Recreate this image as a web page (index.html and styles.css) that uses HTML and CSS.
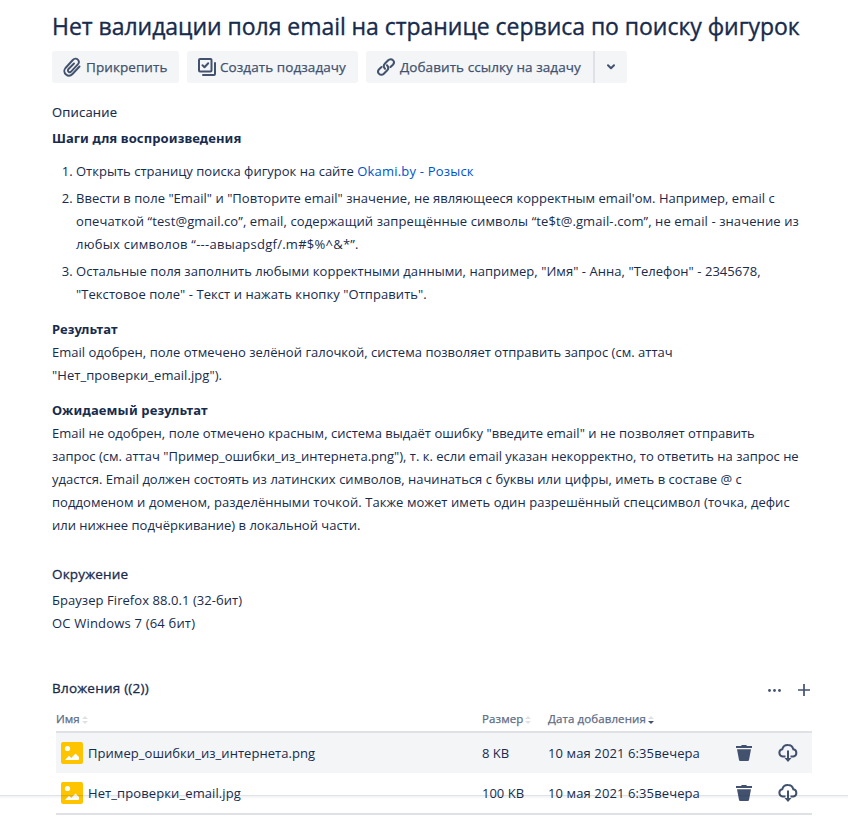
FILE: index.html
```html
<!DOCTYPE html>
<html lang="ru">
<head>
<meta charset="utf-8">
<title>Нет валидации поля email</title>
<link rel="stylesheet" href="styles.css">
</head>
<body>
<svg width="0" height="0" class="defs" aria-hidden="true">
  <symbol id="image" viewBox="0 0 22 22"><rect width="22" height="22" rx="2" fill="#ffc400"/><circle cx="6.500" cy="6.500" r="2.600" fill="#fff"/><path d="M4 18l4-4.200 2.200 2.200 4.300-4.600L18 15v2a1 1 0 0 1-1 1z" fill="#fff"/></symbol>
  <symbol id="trash" viewBox="0 0 16 16"><path d="M0 1.100h5L5.800 0h4.400l.8 1.100h5V3H0zM1 4.200h14l-2 10.800q-.2 1-1.200 1H4.200q-1 0-1.200-1z" fill="currentColor"/></symbol>
  <symbol id="cloud" viewBox="0 0 20 18"><path d="M7.500 12.500H4.700A3.700 3.700 0 0 1 4.300 5.200C5 2.500 7.500 1 10 1.100c3 0 4.700 1.900 5.300 4.200a3.650 3.650 0 0 1 0 7.200h-2.800M10 6.500V15" fill="none" stroke="currentColor" stroke-width="2"/><path d="M6.500 14h7L10 18z" fill="currentColor"/></symbol>
  <symbol id="sort" viewBox="0 0 6 8"><path class="up" d="M3 0l3 3H0z"/><path class="down" d="M0 5h6L3 8z"/></symbol>
</svg>
<main class="issue">
  <h1 class="title">Нет валидации поля email на странице сервиса по поиску фигурок</h1>
  <div class="toolbar">
    <button class="btn attach"><svg width="18" height="20" viewBox="0 0 18 20" fill="none" stroke="currentColor" stroke-width="1.900" stroke-linecap="round"><path d="M16.500 9.500l-7 7.500C7.700 18.900 5 19.200 3 17.500S.8 13 2.500 11l7.300-8c1.600-1.700 3.700-1.700 5-.4s1.300 3.300 0 4.800l-6.500 7c-.9 1-2 1-2.800.3s-.8-1.800 0-2.700L11 6.500"/></svg><span>Прикрепить</span></button>
    <button class="btn subtask"><svg width="18" height="18" viewBox="0 0 18 18" fill="none" stroke="currentColor" stroke-width="2" stroke-linecap="round" stroke-linejoin="round"><rect x="1" y="1" width="12.500" height="12.500" rx="1"/><path d="M4.500 7.300l2 2 3.700-4M17 5v11q0 1-1 1H5"/></svg><span>Создать подзадачу</span></button>
    <div class="split">
      <button class="btn link"><svg width="18" height="18" viewBox="0 0 18 18" fill="none" stroke="currentColor" stroke-width="2" stroke-linecap="round"><path d="M8 10.800C6.300 9 6.500 7 8 5.500l3.200-3.200c1.500-1.500 3.400-1.500 4.700-.2s1.300 3.200 0 4.600L13.500 9M10 7.200c1.700 1.800 1.500 3.800 0 5.300l-3.200 3.200c-1.500 1.500-3.400 1.500-4.700.2s-1.300-3.200 0-4.600L4.500 9"/></svg><span>Добавить ссылку на задачу</span></button>
      <button class="btn more" aria-label="Ещё"><svg width="8" height="6" viewBox="0 0 8 6" fill="none" stroke="currentColor" stroke-width="2" stroke-linecap="round" stroke-linejoin="round"><path d="M1 1.200l3 3 3-3"/></svg></button>
    </div>
  </div>

  <section class="description">
    <h2 class="label">Описание</h2>
    <h3 class="steps">Шаги для воспроизведения</h3>
    <ol>
      <li><span class="line">Открыть страницу поиска фигурок на сайте <a>Okami.by - Розыск</a></span></li>
      <li><span class="line s3">Ввести в поле "Email" и "Повторите email" значение, не являющееся корректным email'ом. Например, email с</span>
        <span class="line s9">опечаткой “test@gmail.co”, email, содержащий запрещённые символы “te$t@.gmail-.com”, не email - значение из</span>
        <span class="line s25">любых символов “---авыapsdgf/.m#$%^&amp;*”.</span></li>
      <li><span class="line s4">Остальные поля заполнить любыми корректными данными, например, "Имя" - Анна, "Телефон" - 2345678,</span>
        <span class="line s6">"Текстовое поле" - Текст и нажать кнопку "Отправить".</span></li>
    </ol>
    <div class="block">
      <h3>Результат</h3>
      <span class="line">Email одобрен, поле отмечено зелёной галочкой, система позволяет отправить запрос (см. аттач</span>
      <span class="line s6">"Нет_проверки_email.jpg").</span>
    </div>
    <div class="block">
      <h3 class="s17">Ожидаемый результат</h3>
      <span class="line">Email не одобрен, поле отмечено красным, система выдаёт ошибку "введите email" и не позволяет отправить</span>
      <span class="line flat">запрос (см. аттач "Пример_ошибки_из_интернета.png"), т. к. если email указан некорректно, то ответить на запрос не</span>
      <span class="line">удастся. Email должен состоять из латинских символов, начинаться с буквы или цифры, иметь в составе @ с</span>
      <span class="line s4">поддоменом и доменом, разделёнными точкой. Также может иметь один разрешённый спецсимвол (точка, дефис</span>
      <span class="line tight">или нижнее подчёркивание) в локальной части.</span>
    </div>
  </section>

  <section class="environment">
    <h2>Окружение</h2>
    <span class="line s4">Браузер Firefox 88.0.1 (32-бит)</span>
    <span class="line s17">ОС Windows 7 (64 бит)</span>
  </section>

  <section class="attachments">
    <header>
      <h2>Вложения ((2))</h2>
      <div class="actions">
        <svg width="13" height="3" viewBox="0 0 13 3" fill="currentColor"><circle cx="1.500" cy="1.500" r="1.400"/><circle cx="6.500" cy="1.500" r="1.400"/><circle cx="11.500" cy="1.500" r="1.400"/></svg>
        <svg width="12" height="12" viewBox="0 0 12 12" stroke="currentColor" stroke-width="1.700"><path d="M6 0v12M0 6h12"/></svg>
      </div>
    </header>
    <div class="table">
      <div class="row head">
        <span>Имя<svg class="sort"><use href="#sort"/></svg></span>
        <span>Размер<svg class="sort"><use href="#sort"/></svg></span>
        <span>Дата добавления<svg class="sort desc"><use href="#sort"/></svg></span>
      </div>
      <div class="row selected">
        <span class="file"><svg><use href="#image"/></svg>Пример_ошибки_из_интернета.png</span>
        <span>8 KB</span>
        <span class="date">10 мая 2021 6:35вечера</span>
        <svg class="trash"><use href="#trash"/></svg>
        <svg class="cloud"><use href="#cloud"/></svg>
      </div>
      <div class="row">
        <span class="file s9"><svg><use href="#image"/></svg>Нет_проверки_email.jpg</span>
        <span>100 KB</span>
        <span class="date">10 мая 2021 6:35вечера</span>
        <svg class="trash"><use href="#trash"/></svg>
        <svg class="cloud"><use href="#cloud"/></svg>
      </div>
    </div>
  </section>
</main>
<div class="dock-edge"></div>
</body>
</html>
```
FILE: styles.css
```css
* { box-sizing: border-box; }
body {
  margin: 0;
  height: 833px;
  position: relative;
  overflow: hidden;
  background: #fff;
  color: #172b4d;
  font: 13px/23px "Open Sans", "Noto Sans", sans-serif;
}
.defs { position: absolute; }
.issue { width: 848px; padding: 10px 36px 0 52px; }
h1, h2, h3, ol { margin: 0; padding: 0; }
.title {
  font-size: 23px;
  line-height: 32px;
  font-weight: 500;
  letter-spacing: -.04px;
  white-space: nowrap;
  -webkit-text-stroke: .35px currentColor;
}

.toolbar { display: flex; gap: 8px; margin-top: 9px; }
.btn {
  display: flex;
  align-items: center;
  height: 32px;
  padding: 0;
  border: 0;
  border-radius: 3px;
  background: #f4f5f7;
  color: #42526e;
  font: 500 13.500px/32px "Open Sans", sans-serif;
  letter-spacing: .07px;
  white-space: nowrap;
  -webkit-text-stroke: .25px currentColor;
}
.btn svg { flex: none; }
.attach { width: 127px; padding-left: 11px; gap: 5px; }
.subtask { width: 171px; padding-left: 11px; gap: 4px; }
.split { display: flex; }
.link { width: 227px; padding-left: 11px; gap: 5px; border-radius: 3px 0 0 3px; }
.more { width: 34px; padding-left: 12px; border-left: 2px solid #dfe1e6; border-radius: 0 3px 3px 0; }

.line { display: block; white-space: nowrap; word-spacing: .1px; }
ol .line, .flat { word-spacing: 0; }
ol li:first-child .line { word-spacing: .1px; }
.tight { letter-spacing: -.02px; }
.s3 { letter-spacing: .03px; }
.s4 { letter-spacing: .05px; }
.s6 { letter-spacing: .065px; }
.s9 { letter-spacing: .1px; }
.s17 { letter-spacing: .17px; }
.s25 { letter-spacing: .255px; }
a { color: #0052cc; letter-spacing: .18px; }

h2 {
  font-size: 13.500px;
  font-weight: 500;
  line-height: 23px;
  letter-spacing: .17px;
  -webkit-text-stroke: .3px currentColor;
}
h3 { font: 700 13px/23px "Noto Sans", sans-serif; letter-spacing: .1px; }
h3.s17 { letter-spacing: .17px; }
.description { padding-top: 18px; }
h2.label { font-size: 13px; letter-spacing: .18px; -webkit-text-stroke-width: .15px; }
.steps { margin-top: 3px; }
ol { margin-top: 10px; padding-left: 24px; }
li + li { margin-top: 4px; }
.block { margin-top: 12px; }
.environment { margin-top: 26px; }
.environment h2 { margin-bottom: 3px; }

.attachments { margin-top: 42px; }
.attachments header { display: flex; justify-content: space-between; }
.attachments h2 { letter-spacing: .22px; }
.actions { display: flex; align-items: center; gap: 17px; margin: 3px 2px 0 0; color: #42526e; }
.table { width: 756px; margin-left: 4px; border-bottom: 2px solid #dfe1e6; }
.row {
  display: grid;
  grid-template-columns: 426px 66px 188px 42px 34px;
  align-items: center;
  height: 40px;
  white-space: nowrap;
}
.head {
  height: 33px;
  padding-top: 5px;
  border-bottom: 2px solid #dfe1e6;
  color: #5e6c84;
  font-size: 11.500px;
  font-weight: 500;
  letter-spacing: .1px;
  -webkit-text-stroke: .25px currentColor;
}
.selected { background: #f4f5f7; }
.sort { width: 6px; height: 8px; margin-left: 2px; vertical-align: -1px; fill: #dfe1e6; -webkit-text-stroke: 0; }
.desc { --down: #42526e; }
.down { fill: var(--down, #dfe1e6); }
.file { display: flex; align-items: center; gap: 5px; padding-left: 5px; letter-spacing: .05px; }
.file.s9 { letter-spacing: .1px; }
.file svg { width: 22px; height: 22px; }
.date { letter-spacing: .11px; }
.trash { width: 16px; height: 16px; color: #42526e; }
.cloud { width: 20px; height: 18px; color: #42526e; }
.dock-edge {
  position: absolute;
  left: 0;
  right: 0;
  top: 795px;
  height: 4px;
  background: linear-gradient(rgba(9, 30, 66, .13) 0 1px, rgba(9, 30, 66, .06) 1px, transparent);
}
```
